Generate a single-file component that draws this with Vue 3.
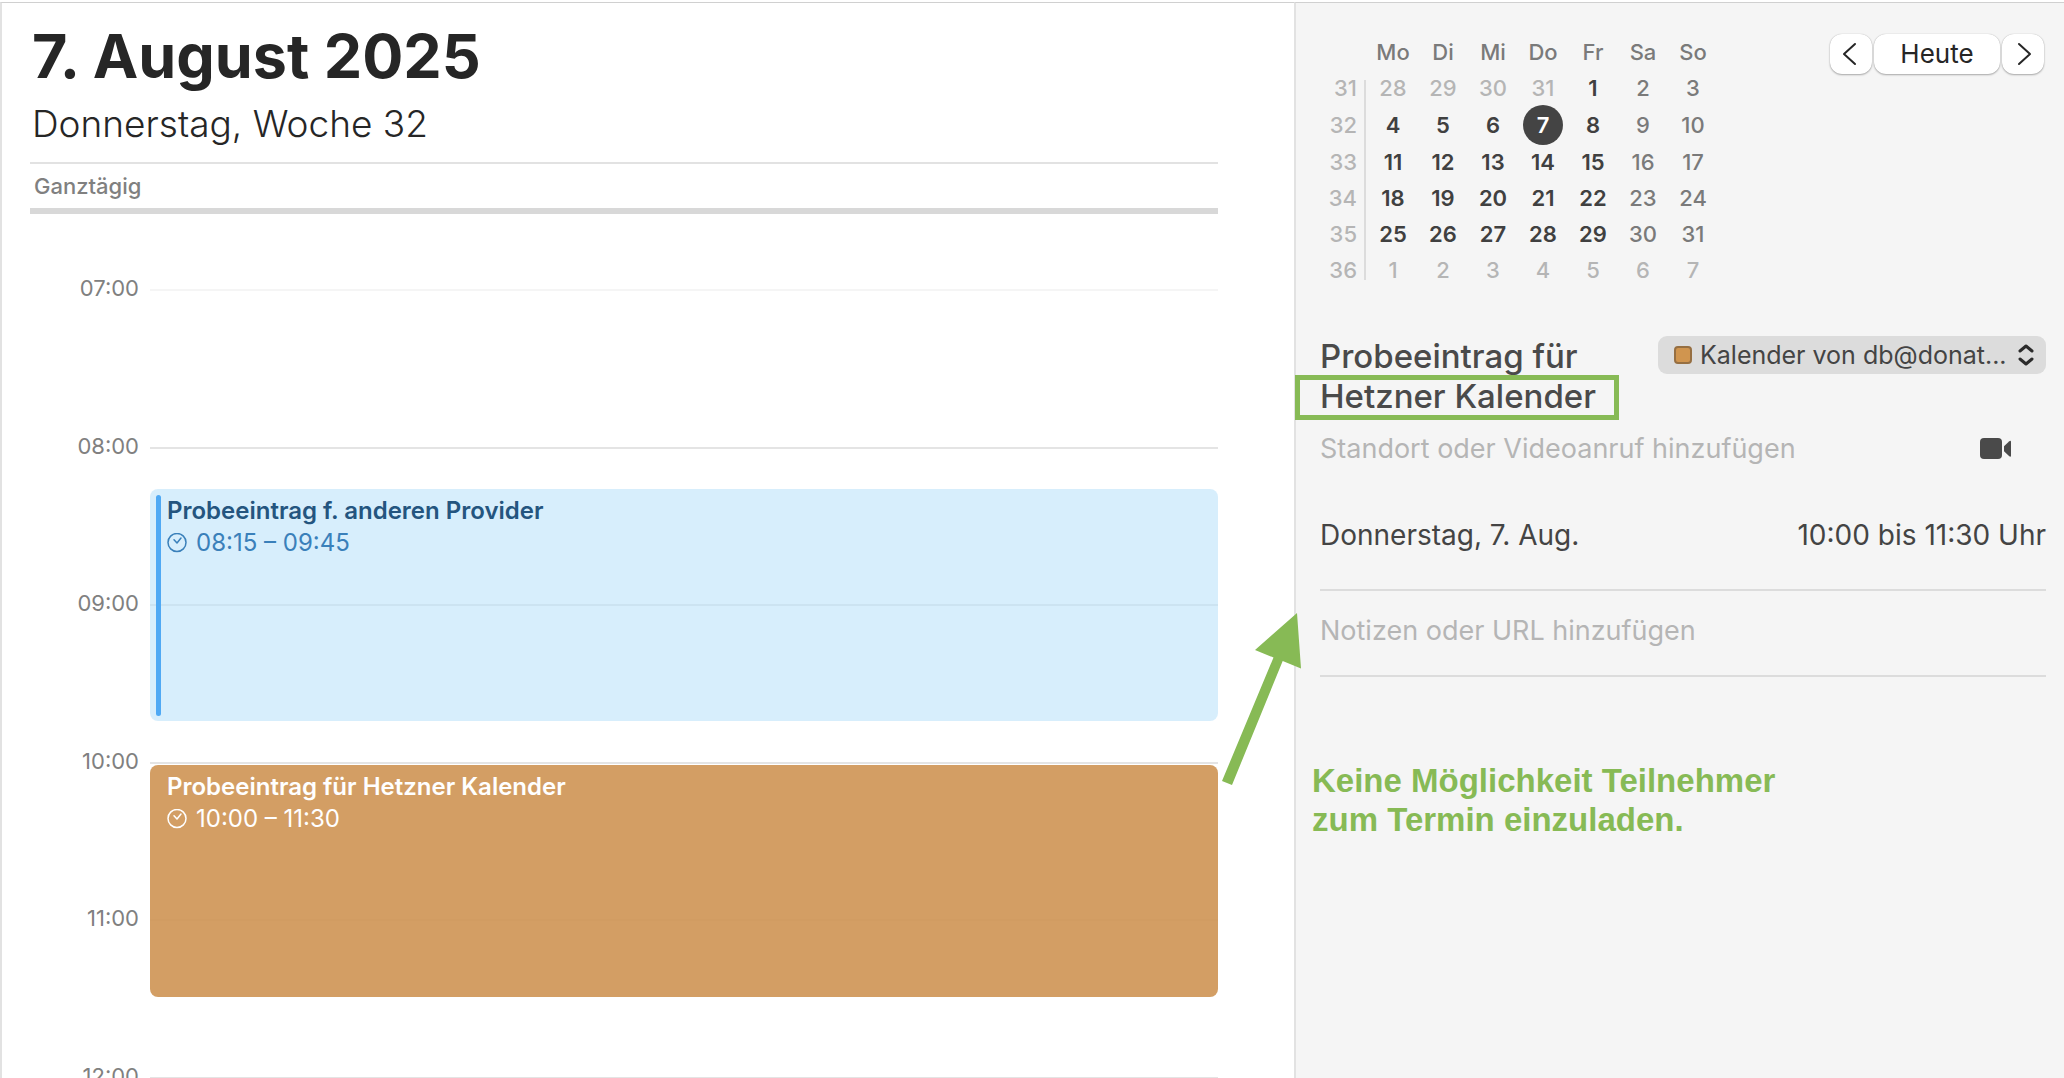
<script setup>
const hours = ['07:00', '08:00', '09:00', '10:00', '11:00', '12:00']

// start and span are counted in quarter hours from 07:00
const events = [
  { title: 'Probeeintrag f. anderen Provider', time: '08:15 – 09:45', start: 5, span: 6, kind: 'blue' },
  { title: 'Probeeintrag für Hetzner Kalender', time: '10:00 – 11:30', start: 12, span: 6, kind: 'orange' },
]

const weekdays = ['Mo', 'Di', 'Mi', 'Do', 'Fr', 'Sa', 'So']
const weeks = [
  { no: 31, days: [28, 29, 30, 31, 1, 2, 3] },
  { no: 32, days: [4, 5, 6, 7, 8, 9, 10] },
  { no: 33, days: [11, 12, 13, 14, 15, 16, 17] },
  { no: 34, days: [18, 19, 20, 21, 22, 23, 24] },
  { no: 35, days: [25, 26, 27, 28, 29, 30, 31] },
  { no: 36, days: [1, 2, 3, 4, 5, 6, 7] },
]

function dayClass(week, day, index) {
  const outside = (week.no === 31 && day > 7) || week.no === 36
  return {
    outside,
    weekend: !outside && index > 4,
    selected: week.no === 32 && day === 7,
  }
}
</script>

<template>
  <div class="calendar">
    <main class="day">
      <header class="day-head">
        <h1>7. August 2025</h1>
        <p class="subtitle">Donnerstag, Woche 32</p>
      </header>
      <div class="allday">Ganztägig</div>
      <section class="timeline">
        <div
          v-for="(hour, i) in hours"
          :key="hour"
          class="hour"
          :class="{ faint: i === 0 }"
          :style="{ gridRow: `${i * 4 + 1} / span 4` }"
        >
          <span class="hour-label">{{ hour }}</span>
          <span class="hour-line"></span>
        </div>
        <article
          v-for="event in events"
          :key="event.title"
          class="event"
          :class="event.kind"
          :style="{ gridRow: `${event.start + 1} / span ${event.span}` }"
        >
          <span class="event-bar"></span>
          <div>
            <h2>{{ event.title }}</h2>
            <p class="event-time">
              <svg width="20" height="20" viewBox="0 0 20 20" fill="none" stroke="currentColor" stroke-width="1.5" stroke-linecap="round" stroke-linejoin="round" aria-hidden="true">
                <circle cx="10" cy="9.500" r="9" />
                <path d="M7 6.700l3 3.300 4-5" />
              </svg>
              <span>{{ event.time }}</span>
            </p>
          </div>
        </article>
      </section>
    </main>

    <aside class="side">
      <div class="side-top">
        <table class="mini">
          <thead>
            <tr>
              <th class="week"></th>
              <th v-for="name in weekdays" :key="name" scope="col">{{ name }}</th>
            </tr>
          </thead>
          <tbody>
            <tr v-for="week in weeks" :key="week.no" :class="{ current: week.no === 32 }">
              <th class="week" scope="row">{{ week.no }}</th>
              <td v-for="(day, i) in week.days" :key="i" :class="dayClass(week, day, i)">
                <span>{{ day }}</span>
              </td>
            </tr>
          </tbody>
        </table>
        <nav class="pager">
          <button type="button" class="step" aria-label="Vorheriger Tag">
            <svg width="18" height="24" viewBox="0 0 18 24" fill="none" stroke="currentColor" stroke-width="2" stroke-linecap="round" stroke-linejoin="round"><path d="M13 2L2 12l11 10" /></svg>
          </button>
          <button type="button" class="today">Heute</button>
          <button type="button" class="step" aria-label="Nächster Tag">
            <svg width="18" height="24" viewBox="0 0 18 24" fill="none" stroke="currentColor" stroke-width="2" stroke-linecap="round" stroke-linejoin="round"><path d="M5 2l11 10L5 22" /></svg>
          </button>
        </nav>
      </div>

      <section class="details">
        <div class="title-row">
          <h2 class="title">Probeeintrag für <span class="marked">Hetzner Kalender</span></h2>
          <div class="picker">
            <span class="swatch"></span>
            <select aria-label="Kalender">
              <option>Kalender von db@donat...</option>
            </select>
            <svg width="16" height="24" viewBox="0 0 16 24" fill="none" stroke="#2b2b2b" stroke-width="3" stroke-linecap="round" stroke-linejoin="round" aria-hidden="true"><path d="M2 8l6-5 6 5M2 16l6 5 6-5" /></svg>
          </div>
        </div>
        <div class="place-row">
          <input type="text" aria-label="Standort" placeholder="Standort oder Videoanruf hinzufügen" />
          <svg width="32" height="22" viewBox="0 0 32 22" fill="#4a4a4a" aria-hidden="true">
            <rect x="0" y="0" width="22" height="21" rx="4" />
            <path d="M24 8.200l5-4.800q2-1.500 2 .6v13.400q0 2.100-2 .6l-5-4.800z" />
          </svg>
        </div>
        <div class="date-row">
          <span>Donnerstag, 7. Aug.</span>
          <span>10:00 bis 11:30 Uhr</span>
        </div>
        <div class="notes-row">
          <input type="text" aria-label="Notizen" placeholder="Notizen oder URL hinzufügen" />
        </div>
      </section>

      <p class="remark">Keine Möglichkeit Teilnehmer<br />zum Termin einzuladen.</p>

      <svg class="arrow" width="82" height="176" viewBox="0 0 82 176" aria-hidden="true">
        <path fill="#87ba55" d="M77 3L81 58.500 62.700 51 12 175 2 171 53.500 47.500 35 40z" />
      </svg>
    </aside>
  </div>
</template>

<style>
body {
  margin: 0;
  background: #fff;
}
</style>

<style scoped>
.calendar {
  box-sizing: border-box;
  display: grid;
  grid-template-columns: minmax(0, 1fr) 770px;
  height: 100vh;
  overflow: hidden;
  padding-top: 2px;
  background: #fff;
  font-family: Inter, "Liberation Sans", sans-serif;
  color: #262626;
}

h1,
h2,
p {
  margin: 0;
}

.day {
  border-left: 2px solid #e2e2e2;
  border-top: 1px solid #d0d0d0;
  padding: 15px 76px 0 28px;
}

.day-head {
  padding: 0 2px 8px;
}

h1 {
  font-size: 61px;
  line-height: 76px;
  font-weight: 700;
}

.subtitle {
  font-size: 37px;
  line-height: 60px;
  font-weight: 300;
}

.allday {
  border-top: 2px solid #e2e2e2;
  border-bottom: 6px solid #d8d8d8;
  padding: 0 4px;
  font-size: 22px;
  line-height: 44px;
  font-weight: 500;
  color: #808080;
}

.timeline {
  display: grid;
  grid-template-columns: 120px minmax(0, 1fr);
  grid-template-rows: repeat(24, 1fr);
  height: 945px;
  margin-top: 75px;
}

.hour {
  grid-column: 1 / 3;
  display: flex;
  align-items: flex-start;
  gap: 11px;
}

.hour-label {
  width: 109px;
  margin-top: -15px;
  font-size: 22px;
  line-height: 28px;
  text-align: right;
  color: #808080;
}

.hour-line {
  flex: 1;
  height: 2px;
  background: #e4e4e4;
}

.faint .hour-line {
  background: #f5f5f5;
}

.event {
  grid-column: 2;
  display: flex;
  gap: 6px;
  margin: 3px 0 1px;
  padding: 6px 6px 5px;
  border-radius: 8px;
}

.event-bar {
  width: 5px;
  border-radius: 3px;
}

.event h2 {
  font-size: 24px;
  line-height: 32px;
  font-weight: 600;
}

.event-time {
  display: flex;
  align-items: center;
  gap: 9px;
  font-size: 24px;
  line-height: 32px;
}

.blue {
  background: rgba(188, 227, 250, 0.6);
  color: #24557f;
}

.blue .event-bar {
  background: #4fa9f4;
}

.blue .event-time {
  color: #3a80ba;
}

.orange {
  background: rgba(206, 148, 83, 0.9);
  color: #fff;
}

.side {
  position: relative;
  border-left: 2px solid #e2e2e2;
  border-top: 1px solid #d0d0d0;
  padding: 31px 18px 0 24px;
  background: #f5f5f5;
}

.side-top {
  display: flex;
  justify-content: space-between;
  align-items: flex-start;
}

.mini {
  border-collapse: collapse;
  table-layout: fixed;
  width: 398px;
  background: linear-gradient(#dcdcdc, #dcdcdc) 44px 46px / 2px 200px no-repeat;
  font-size: 22px;
  line-height: 36px;
}

.mini th,
.mini td {
  height: 36px;
  padding: 0;
  text-align: center;
  font-weight: 600;
  color: #404040;
}

.mini thead th {
  font-weight: 500;
  color: #7a7a7a;
}

.mini .week {
  width: 37px;
  padding-right: 11px;
  text-align: right;
  font-weight: 500;
  color: #b5b5b5;
}

.mini .current th,
.mini .current td {
  height: 38px;
}

.mini .outside {
  font-weight: 500;
  color: #b5b5b5;
}

.mini .weekend {
  font-weight: 500;
  color: #7a7a7a;
}

.mini .selected span {
  display: block;
  width: 40px;
  margin: -1px auto;
  border-radius: 50%;
  background: #444;
  color: #fff;
  line-height: 40px;
}

.pager {
  display: flex;
  gap: 2px;
  padding-right: 2px;
}

.pager button {
  display: flex;
  align-items: center;
  justify-content: center;
  height: 40px;
  padding: 0;
  border: 0;
  border-radius: 12px;
  background: #fff;
  box-shadow: 0 1px 2px rgba(0, 0, 0, 0.3), 0 0 1px rgba(0, 0, 0, 0.25);
  font: 400 26px/40px Inter, "Liberation Sans", sans-serif;
  color: #262626;
}

.pager .step {
  width: 42px;
}

.pager .today {
  width: 126px;
}

.details {
  margin-top: 48px;
  font-size: 28px;
  color: #444;
}

.title-row {
  display: flex;
  justify-content: space-between;
  align-items: flex-start;
}

.title {
  width: 324px;
  font-size: 33px;
  line-height: 40px;
  font-weight: 500;
  color: #4a4a4a;
}

.marked {
  position: relative;
  display: block;
}

.marked::after {
  content: "";
  position: absolute;
  inset: -1px auto auto -25px;
  width: 314px;
  height: 35px;
  border: 5px solid #87ba55;
}

.picker {
  position: relative;
  width: 388px;
}

.picker select {
  appearance: none;
  width: 100%;
  height: 38px;
  padding: 0 32px 0 42px;
  border: 0;
  border-radius: 9px;
  background: #dcdcdc;
  font: 400 25px/38px Inter, "Liberation Sans", sans-serif;
  color: #444;
}

.swatch {
  position: absolute;
  left: 16px;
  top: 10px;
  box-sizing: border-box;
  width: 18px;
  height: 18px;
  border: 2px solid #966f42;
  border-radius: 4px;
  background: #d0954f;
}

.picker svg {
  position: absolute;
  right: 12px;
  top: 7px;
}

input {
  flex: 1;
  min-width: 0;
  height: 40px;
  padding: 0;
  border: 0;
  background: none;
  font: 400 27px/40px Inter, "Liberation Sans", sans-serif;
  color: #444;
}

input::placeholder {
  color: #b5b5b5;
  opacity: 1;
}

.place-row {
  display: flex;
  align-items: center;
  padding: 13px 34px 0 0;
}

.date-row {
  display: flex;
  justify-content: space-between;
  padding: 46px 0 34px;
  border-bottom: 2px solid #dcdcdc;
  line-height: 40px;
}

.notes-row {
  display: flex;
  padding: 20px 0 24px;
  border-bottom: 2px solid #dcdcdc;
}

.remark {
  margin: 84px 0 0 -8px;
  font: 700 33px/39px "Liberation Sans", Arial, sans-serif;
  color: #87ba55;
}

.arrow {
  position: absolute;
  left: -76px;
  top: 607px;
}
</style>
